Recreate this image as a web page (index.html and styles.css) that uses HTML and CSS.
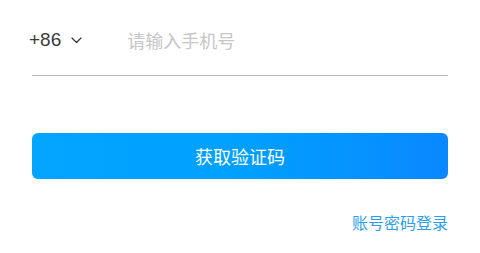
FILE: index.html
```html
<!DOCTYPE html>
<html lang="zh">
<head>
<meta charset="utf-8">
<link rel="stylesheet" href="styles.css">
</head>
<body>
<div class="page">
  <div class="phone-row">
    <div class="code">
      <span class="code-text">+86</span>
      <svg class="chev" width="11" height="7" viewBox="0 0 11 7"><polyline points="1,1 5.5,5.5 10,1" fill="none" stroke="#333" stroke-width="1.2" stroke-linecap="round" stroke-linejoin="round"/></svg>
    </div>
    <input class="phone-input" type="text" placeholder="请输入手机号">
  </div>
  <button class="submit">获取验证码</button>
  <div class="links"><a class="pwd-link">账号密码登录</a></div>
</div>
</body>
</html>
```
FILE: styles.css
```css
html, body {
  margin: 0;
  padding: 0;
  background: #ffffff;
  font-family: "Liberation Sans", "Noto Sans CJK SC", sans-serif;
}
.page {
  width: 480px;
  padding: 0 32px;
  box-sizing: border-box;
}
.phone-row {
  display: flex;
  align-items: center;
  padding-top: 28px;
  padding-bottom: 23px;
  border-bottom: 1px solid #b8b8b8;
  height: 24px;
}
.code {
  display: flex;
  align-items: center;
  color: #3a3a3a;
}
.code-text {
  font-size: 19px;
  line-height: 24px;
  margin-left: -3px;
}
.chev {
  margin-left: 10px;
  margin-top: 1px;
}
.phone-input {
  border: none;
  outline: none;
  padding: 0;
  margin-left: 45px;
  font-family: "Noto Sans CJK SC", sans-serif;
  font-size: 18px;
  line-height: 24px;
  height: 24px;
  width: 200px;
  color: #333;
  background: transparent;
}
.phone-input::placeholder {
  color: #c6c6c6;
}
.submit {
  display: block;
  width: 100%;
  height: 46px;
  margin-top: 57px;
  border: none;
  border-radius: 6px;
  background: linear-gradient(90deg, #03a5ff 0%, #00a0ff 50%, #0a88ff 100%);
  color: #ffffff;
  font-family: "Noto Sans CJK SC", sans-serif;
  font-size: 18px;
  padding: 0;
}
.links {
  display: flex;
  justify-content: flex-end;
  margin-top: 32px;
}
.pwd-link {
  font-family: "Noto Sans CJK SC", sans-serif;
  font-size: 16px;
  line-height: 22px;
  color: #2c9ef0;
}
```
